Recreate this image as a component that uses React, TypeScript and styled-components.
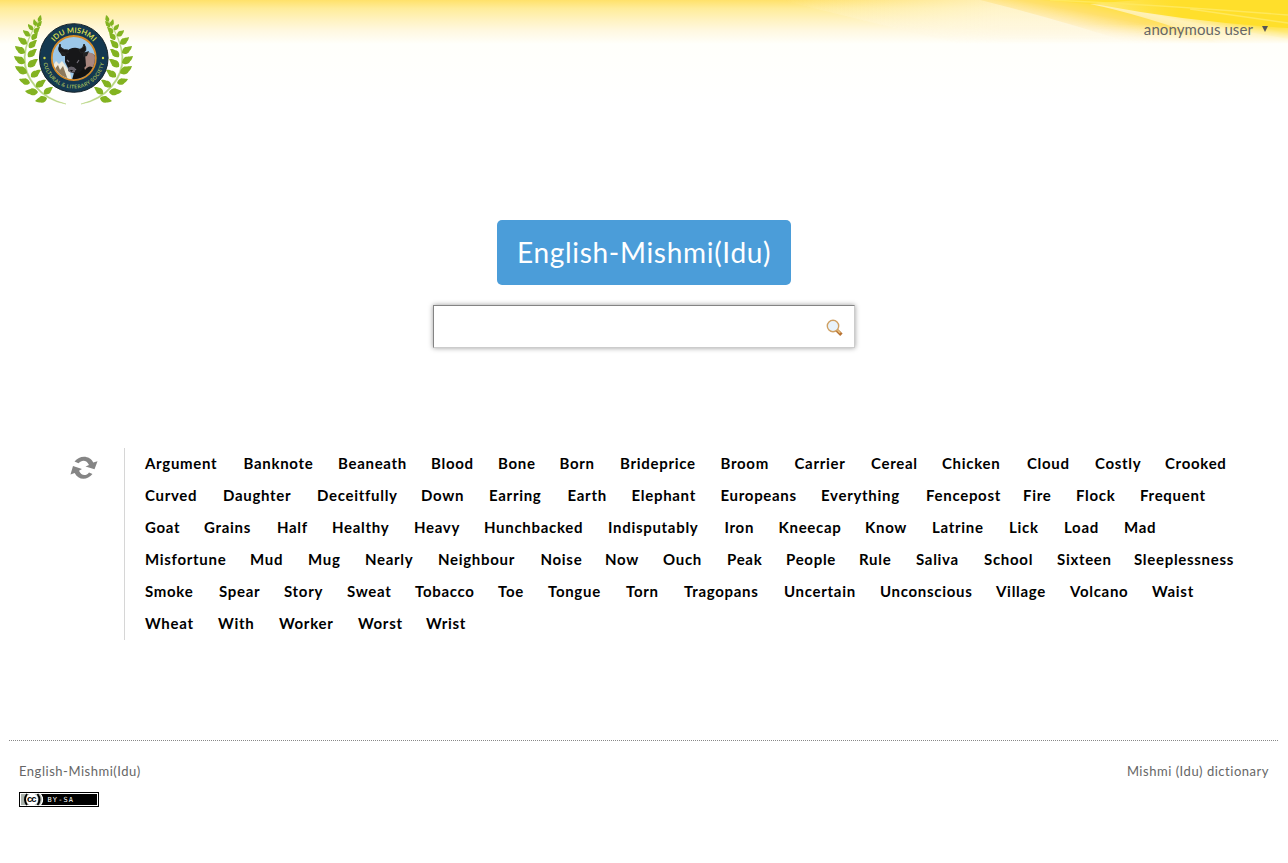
import React from "react";
import styled, { createGlobalStyle } from "styled-components";

const Global = createGlobalStyle`
  * { box-sizing: border-box; }
  body { margin: 0; background: #fff; font-family: Lato, "Liberation Sans", sans-serif; }
`;

const Page = styled.div`
  position: relative;
  min-height: 863px;
  display: flex;
  flex-direction: column;
`;

const Backdrop = styled.svg`
  position: absolute;
  top: 0;
  left: 0;
  z-index: -1;
`;

const Header = styled.header`
  height: 220px;
  padding: 10px 20px 0 10px;
  display: flex;
  justify-content: space-between;
`;

const UserMenu = styled.a`
  display: flex;
  height: 20px;
  margin-top: 9px;
  align-items: center;
  gap: 9px;
  color: #666;
  font-size: 15px;
  letter-spacing: 0.08px;
`;

const Caret = styled.span`
  border: 3.5px solid transparent;
  border-top: 6px solid #555;
  border-bottom: 0;
`;

const Search = styled.main`
  display: flex;
  flex-direction: column;
  align-items: center;
  gap: 20px;
`;

const Title = styled.h1`
  width: 294px;
  height: 65px;
  margin: 0;
  border-radius: 5px;
  background: #4b9dd9;
  color: #fff;
  font-size: 28px;
  font-weight: 400;
  line-height: 65px;
  text-align: center;
  white-space: nowrap;
  letter-spacing: 0.7px;
`;

const SearchField = styled.div`
  width: 422px;
  height: 43px;
  display: flex;
  align-items: center;
  justify-content: flex-end;
  padding: 2px 11px 0 0;
  background: #fff;
  border: 1px solid;
  border-color: #848484 #ccc #ccc #848484;
  box-shadow: 0 0 5px rgba(0, 0, 0, 0.4);
`;

const Words = styled.section`
  display: flex;
  margin-top: 100px;
  padding-left: 70px;
`;

const Refresh = styled.div`
  width: 54px;
  padding-top: 8px;
`;

const WordList = styled.div`
  border-left: 1px solid #d6d6d6;
  padding-left: 20px;
`;

const Row = styled.div`
  display: flex;
  height: 32px;
`;

const Word = styled.a<{ $step: number }>`
  flex: none;
  width: ${(p) => p.$step}px;
  color: #000;
  font-size: 15px;
  font-weight: 700;
  line-height: 31px;
  letter-spacing: 0.7px;
  white-space: nowrap;
`;

const Footer = styled.footer`
  display: flex;
  justify-content: space-between;
  margin: 100px 10px 0 9px;
  padding: 21px 9px 0 10px;
  border-top: 1px dotted #888;
  color: #666;
  font-size: 13px;
  letter-spacing: 0.52px;
  line-height: 18px;
`;

const Credits = styled.div`
  display: flex;
  flex-direction: column;
  gap: 12px;
`;

type Entry = [string, number];
const rows: Entry[][] = [
  [["Argument", 98.5], ["Banknote", 94.5], ["Beaneath", 93], ["Blood", 67], ["Bone", 61.5], ["Born", 60.5], ["Brideprice", 100.5], ["Broom", 74], ["Carrier", 76.5], ["Cereal", 71], ["Chicken", 85], ["Cloud", 68], ["Costly", 70], ["Crooked", 87]],
  [["Curved", 78], ["Daughter", 94], ["Deceitfully", 104], ["Down", 68], ["Earring", 78.5], ["Earth", 64], ["Elephant", 89], ["Europeans", 100.5], ["Everything", 105], ["Fencepost", 97], ["Fire", 53], ["Flock", 64], ["Frequent", 89]],
  [["Goat", 59], ["Grains", 73], ["Half", 55], ["Healthy", 82], ["Heavy", 70], ["Hunchbacked", 124], ["Indisputably", 116.5], ["Iron", 54], ["Kneecap", 86.5], ["Know", 67], ["Latrine", 77], ["Lick", 55], ["Load", 60], ["Mad", 56]],
  [["Misfortune", 105], ["Mud", 58], ["Mug", 57], ["Nearly", 73], ["Neighbour", 102.5], ["Noise", 64.5], ["Now", 58], ["Ouch", 64], ["Peak", 59], ["People", 73], ["Rule", 57], ["Saliva", 68], ["School", 73], ["Sixteen", 77], ["Sleeplessness", 121]],
  [["Smoke", 74], ["Spear", 65], ["Story", 63], ["Sweat", 68], ["Tobacco", 83], ["Toe", 50], ["Tongue", 78], ["Torn", 58], ["Tragopans", 100], ["Uncertain", 96], ["Unconscious", 116], ["Village", 74], ["Volcano", 82], ["Waist", 66]],
  [["Wheat", 73], ["With", 61], ["Worker", 79], ["Worst", 68], ["Wrist", 64]],
];

// Each leaf runs from its base on the stem to its tip: [baseX, baseY, tipX, tipY].
const leaves = [
  [29, 12, 31, 5], [26, 16, 24, 9], [27, 17, 32, 11],
  [23, 20, 18, 14], [24, 23, 30, 17],
  [20, 26, 13, 20], [22, 30, 28, 22],
  [17, 34, 8, 27], [19, 38, 27, 30],
  [15, 43, 5, 36], [18, 47, 27, 39],
  [15, 53, 4, 46], [18, 57, 28, 49],
  [17, 63, 5, 56], [21, 67, 31, 60],
  [20, 73, 9, 69], [26, 77, 36, 70],
  [28, 82, 15, 81], [34, 84, 43, 77],
  [37, 88, 25, 91],
];

const Branch = () => (
  <g>
    <path d="M29 10Q3 50 26 76Q37 89 56 94Q37 91 25 77Q1 50 29 10Z" fill="#b6d580" stroke="#b6d580" strokeWidth=".5" />
    <g fill="#83b321">
      {leaves.map(([x, y, tx, ty], i) => {
        const length = Math.hypot(tx - x, ty - y);
        const angle = (Math.atan2(ty - y, tx - x) * 180) / Math.PI;
        return <path key={i} transform={`translate(${x} ${y}) rotate(${angle}) scale(${length / 10} ${length / 12.5})`} d="M0 0C1-3 3-4 5-3.4L6-2.7C8-2.5 9-1 10 0C8 1 7 2 6 2.3L5 3.2C3 3.5 1 2 0 0Z" />;
      })}
    </g>
  </g>
);

const Logo = () => (
  <svg width="128" height="98" viewBox="0 0 128 98">
    <defs>
      <path id="ring-top" d="M38.6 48A25.2 25.2 0 0 1 89 48" />
      <path id="ring-bottom" d="M33.2 48A30.6 30.6 0 0 0 94.4 48" />
      <clipPath id="medal"><circle cx="63.8" cy="48" r="21.2" /></clipPath>
    </defs>
    <Branch />
    <g transform="matrix(-1 0 0 1 127 0)"><Branch /></g>
    <circle cx="63.8" cy="48" r="34.3" fill="#143850" stroke="#17232a" />
    <circle cx="63.8" cy="48" r="22" fill="#9cc7e8" stroke="#d78b27" strokeWidth="1.8" />
    <g clipPath="url(#medal)">
      <path d="M42 57L46 51L49 54L52 51L60 62L62 72H42Z" fill="#efeadb" />
      <path d="M44 60L48 55L50 60L53 56L58 70H47Z" fill="#8e795b" />
      <path d="M69 45Q80 39 88 48V60L80 70H62Z" fill="#111" />
      <path d="M74 44Q82 40 86 47L84 58Q79 54 75 60L72 51Z" fill="#a8867e" />
      <path d="M55 43Q60 37 67 38Q73 39 75 43L76 56L69 63Q63 65 59 60L55 52Z" fill="#171719" />
      <path d="M58 43Q45 45 50 34Q50 40 58 40ZM71 43Q79 42 74 34Q74 38 69 40Z" fill="#191818" stroke="#222" />
      <path d="M54 42L49 41L52 46L57 46ZM73 43L79 41L77 46L73 47Z" fill="#222" />
      <path d="M57 50L59 52M69 50L67 53M58 59Q62 56 66 60" stroke="#77727c" strokeWidth="1.2" fill="none" />
      <path d="M58 58Q61 55 65 58L65 62Q61 64 58 61Z" fill="#66616a" />
      <path d="M60 60L63 60L61.5 62Z" fill="#111" />
    </g>
    <g fontFamily="Lato, sans-serif" fontWeight="700" fill="#d3d94f">
      <text fontSize="7.5" textAnchor="middle"><textPath href="#ring-top" startOffset="50%">IDU MISHMI</textPath></text>
      <text fontSize="5.2" fill="#9cb65b" textAnchor="middle" textLength="86"><textPath href="#ring-bottom" startOffset="50%">CULTURAL &amp; LITERARY SOCIETY</textPath></text>
      <circle cx="34.5" cy="48" r="1.2" /><circle cx="93" cy="48" r="1.2" />
    </g>
  </svg>
);

const Background = () => (
  <Backdrop width="1288" height="105" viewBox="0 0 1288 105">
    <defs>
      <linearGradient id="base" x1="0" y1="0" x2="0" y2="1">
        <stop offset="0" stopColor="#ffe16a" /><stop offset=".08" stopColor="#ffec99" /><stop offset=".18" stopColor="#fff2bd" /><stop offset=".29" stopColor="#fff8e0" /><stop offset=".42" stopColor="#fffffb" /><stop offset="1" stopColor="#fff" />
      </linearGradient>
      <linearGradient id="fade" x1="0" y1="0" x2="0" y2="1">
        <stop offset="0" stopColor="#fff" /><stop offset=".55" stopColor="#fff" /><stop offset="1" stopColor="#000" />
      </linearGradient>
      <mask id="soften"><rect width="1288" height="44" fill="url(#fade)" /></mask>
      <linearGradient id="pale" gradientUnits="userSpaceOnUse" x1="780" y1="0" x2="1000" y2="0">
        <stop offset="0" stopColor="#fff8e2" stopOpacity="0" /><stop offset="1" stopColor="#fff8e2" stopOpacity=".65" />
      </linearGradient>
      <linearGradient id="gold" gradientUnits="userSpaceOnUse" x1="1100" y1="0" x2="1092" y2="42">
        <stop offset="0" stopColor="#ffe034" /><stop offset=".35" stopColor="#ffe06c" /><stop offset=".68" stopColor="#ffeec0" stopOpacity=".9" /><stop offset="1" stopColor="#fffaf0" stopOpacity="0" />
      </linearGradient>
      <linearGradient id="veil" gradientUnits="userSpaceOnUse" x1="1200" y1="8" x2="1192" y2="42">
        <stop offset="0" stopColor="#ffe462" /><stop offset=".5" stopColor="#fff1b9" /><stop offset="1" stopColor="#fffdf5" stopOpacity="0" />
      </linearGradient>
      <linearGradient id="edge" gradientUnits="userSpaceOnUse" x1="1050" y1="0" x2="1180" y2="0">
        <stop offset="0" stopColor="#ffe02e" stopOpacity=".2" /><stop offset="1" stopColor="#ffdf2b" />
      </linearGradient>
      <linearGradient id="tail" gradientUnits="userSpaceOnUse" x1="1240" y1="21" x2="1236" y2="37">
        <stop offset="0" stopColor="#ffdf35" /><stop offset="1" stopColor="#fff1ad" stopOpacity="0" />
      </linearGradient>
    </defs>
    <path d="M0 0H1288V105H0Z" fill="url(#base)" />
    <g mask="url(#soften)">
      <path d="M780 0H1288V44H960Z" fill="url(#pale)" />
      <path d="M980 0Q1060 20 1130 43H1288V0Z" fill="url(#gold)" />
      <path d="M1090 4Q1140 14 1220 43H1288V0H1140Z" fill="url(#veil)" />
      <path d="M1090 4Q1180 20 1288 39V20Z" fill="url(#tail)" />
    </g>
    <path d="M1040 0L1100 5Q1190 22 1288 28V0Z" fill="url(#edge)" />
    <path d="M1050 0Q1160 5 1288 15M1190 9L1288 23" stroke="#ffe85c" strokeWidth="1.4" fill="none" />
  </Backdrop>
);

const SearchIcon = () => (
  <svg width="17" height="17" viewBox="0 0 17 17">
    <path d="M10.8 11.2L14.2 14.6" stroke="#b87333" strokeWidth="3.4" strokeLinecap="square" />
    <path d="M11 10.8L14.2 14" stroke="#e9c17d" strokeWidth="1.6" />
    <circle cx="7" cy="7" r="5.7" fill="#e8f3fc" stroke="#cfa063" strokeWidth="1.4" />
  </svg>
);

const RefreshIcon = () => (
  <svg width="28" height="24" viewBox="0 0 28 24" fill="#858585">
    <path d="M4.5 5.5C10-1.5 20-.5 23.3 6.5L27.5 5.3L24.5 13.3L15.5 10.5L19 9C17 4.2 12 3.2 8.5 7.3Z" />
    <path d="M22.5 18C17 25 8 24 4.7 17L.5 18.5L3 10L12 13L9 14.8C11 19.8 16 20.5 19 16.5Z" />
  </svg>
);

const License = () => (
  <svg width="80" height="15" viewBox="0 0 80 15" shapeRendering="crispEdges">
    <path d="M0 0H80V15H0Z" /><path d="M1 1H79V14H1Z" fill="#fff" /><path d="M2 2H78V13H2Z" /><path d="M2 2H22Q26 7.5 22 13H2Z" fill="#aab2ab" />
    <g shapeRendering="auto">
      <circle cx="13" cy="7.5" r="6" fill="#fff" />
      <path d="M8 2Q4 7.5 8 13M18.5 2Q22.5 7.5 18.5 13" fill="none" stroke="#000" strokeWidth="1.8" />
      <path d="M21.5 2Q25.5 7.5 21.5 13" fill="none" stroke="#fff" strokeWidth="1.2" />
    </g>
    <text x="8" y="10.3" fontFamily="Liberation Sans" fontWeight="700" fontSize="9.5" textLength="10">cc</text>
    <text x="28.5" y="10" fontFamily="DejaVu Sans Mono" fontSize="7" textLength="26" fill="#fff">BY-SA</text>
  </svg>
);

export default function App() {
  return (
    <Page>
      <Global />
      <Background />
      <Header><Logo /><UserMenu>anonymous user <Caret /></UserMenu></Header>
      <Search><Title>English-Mishmi(Idu)</Title><SearchField><SearchIcon /></SearchField></Search>
      <Words>
        <Refresh><RefreshIcon /></Refresh>
        <WordList>{rows.map((row, i) => <Row key={i}>{row.map(([word, step]) => <Word key={word} $step={step}>{word}</Word>)}</Row>)}</WordList>
      </Words>
      <Footer><Credits><span>English-Mishmi(Idu)</span><License /></Credits><span>Mishmi (Idu) dictionary</span></Footer>
    </Page>
  );
}
